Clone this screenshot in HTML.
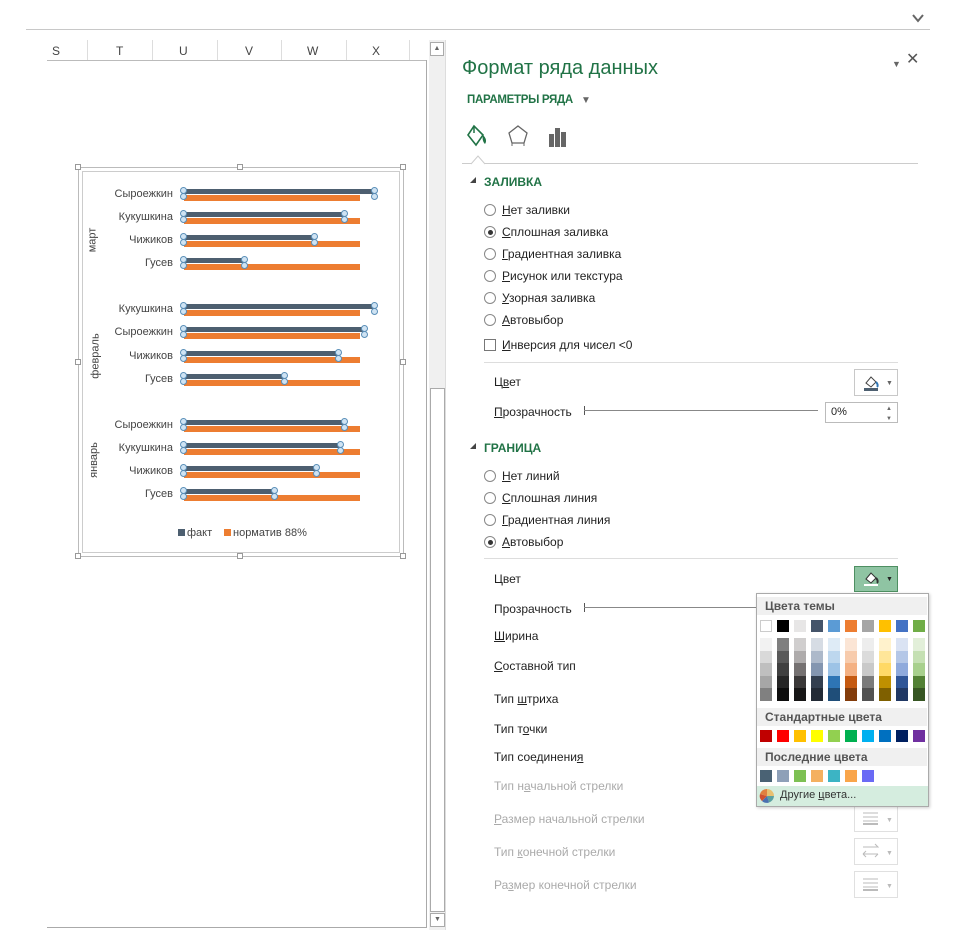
<!DOCTYPE html>
<html><head><meta charset="utf-8"><style>
*{margin:0;padding:0;box-sizing:border-box}
body{width:976px;height:931px;background:#fff;position:relative;overflow:hidden;font-family:"Liberation Sans","DejaVu Sans",sans-serif;font-size:12px;color:#222}
.a{position:absolute}
.t{position:absolute;white-space:nowrap;line-height:14px}
.lbl{position:absolute;right:803px;font-size:11px;color:#444;white-space:nowrap;line-height:12px}
.d{position:absolute;height:5px;background:#4d5f70;left:184px}
.o{position:absolute;height:6px;background:#ed7d31;left:184px;width:176px}
.rad{position:absolute;width:12px;height:12px;border:1px solid #888;border-radius:50%;background:#fff}
.rad.on::after{content:"";position:absolute;left:2.5px;top:2.5px;width:5px;height:5px;border-radius:50%;background:#333}
.rt{position:absolute;left:502px;font-size:12px;color:#222;white-space:nowrap}
.pl{position:absolute;left:494px;font-size:12px;color:#222;white-space:nowrap}
.gr{color:#aaa}
.sec{position:absolute;left:484px;font-weight:bold;color:#217346;font-size:12px;font-family:"Liberation Sans Narrow","Liberation Sans",sans-serif}
.tri{position:absolute;left:470px;width:0;height:0;border-left:6px solid transparent;border-bottom:6px solid #444}
.btn{position:absolute;left:854px;width:44px;height:27px;border:1px solid #c8c8c8;background:#fff}
.hd{position:absolute;left:757px;width:170px;height:18px;background:#f0f0f0;font-weight:bold;color:#555;font-size:12px;padding-left:8px;line-height:18px}
.sw{position:absolute;width:12px;height:12px}
.h{position:absolute;width:7px;height:7px;border:1px solid #5a8fb8;border-radius:50%;background:#cfe3f3}
</style></head><body>
<div class="a" style="left:26px;top:29px;width:904px;height:1px;background:#c8c8c8"></div>
<svg class="a" style="left:912px;top:13px" width="12" height="10"><path d="M1 2 L6 8 L11 2" fill="none" stroke="#666" stroke-width="2"/></svg>
<div class="a" style="left:47px;top:40px;width:379px;height:21px;border-bottom:1px solid #bbb"></div>
<div class="t" style="left:52px;top:44px;color:#444">S</div>
<div class="t" style="left:116px;top:44px;color:#444">T</div>
<div class="t" style="left:179px;top:44px;color:#444">U</div>
<div class="t" style="left:245px;top:44px;color:#444">V</div>
<div class="t" style="left:307px;top:44px;color:#444">W</div>
<div class="t" style="left:372px;top:44px;color:#444">X</div>
<div class="a" style="left:87px;top:40px;width:1px;height:20px;background:#ddd"></div>
<div class="a" style="left:152px;top:40px;width:1px;height:20px;background:#ddd"></div>
<div class="a" style="left:217px;top:40px;width:1px;height:20px;background:#ddd"></div>
<div class="a" style="left:281px;top:40px;width:1px;height:20px;background:#ddd"></div>
<div class="a" style="left:346px;top:40px;width:1px;height:20px;background:#ddd"></div>
<div class="a" style="left:409px;top:40px;width:1px;height:20px;background:#ddd"></div>
<div class="a" style="left:426px;top:60px;width:1px;height:868px;background:#aaa"></div>
<div class="a" style="left:47px;top:927px;width:380px;height:1px;background:#aaa"></div>
<div class="a" style="left:429px;top:40px;width:17px;height:890px;background:#f0f0f0;border-right:1px solid #ddd"></div>
<div class="a" style="left:430px;top:42px;width:14px;height:14px;border:1px solid #aaa;background:#fff;font-size:7px;color:#666;text-align:center;line-height:12px">&#9650;</div>
<div class="a" style="left:430px;top:388px;width:15px;height:524px;border:1px solid #aaa;background:#fff"></div>
<div class="a" style="left:430px;top:913px;width:15px;height:14px;border:1px solid #aaa;background:#fff;font-size:7px;color:#666;text-align:center;line-height:12px">&#9660;</div>
<div class="a" style="left:78px;top:167px;width:326px;height:390px;border:1px solid #bbb"></div>
<div class="a" style="left:82px;top:171px;width:318px;height:382px;border:1px solid #ccc"></div>
<div class="a" style="left:75px;top:164px;width:6px;height:6px;border:1px solid #999;background:#fff"></div>
<div class="a" style="left:237px;top:164px;width:6px;height:6px;border:1px solid #999;background:#fff"></div>
<div class="a" style="left:400px;top:164px;width:6px;height:6px;border:1px solid #999;background:#fff"></div>
<div class="a" style="left:75px;top:359px;width:6px;height:6px;border:1px solid #999;background:#fff"></div>
<div class="a" style="left:400px;top:359px;width:6px;height:6px;border:1px solid #999;background:#fff"></div>
<div class="a" style="left:75px;top:553px;width:6px;height:6px;border:1px solid #999;background:#fff"></div>
<div class="a" style="left:237px;top:553px;width:6px;height:6px;border:1px solid #999;background:#fff"></div>
<div class="a" style="left:400px;top:553px;width:6px;height:6px;border:1px solid #999;background:#fff"></div>
<div class="t" style="left:80px;top:233px;font-size:11px;color:#444;transform:rotate(-90deg)">март</div>
<div class="t" style="left:73px;top:349px;font-size:11px;color:#444;transform:rotate(-90deg)">февраль</div>
<div class="t" style="left:76px;top:453px;font-size:11px;color:#444;transform:rotate(-90deg)">январь</div>
<div class="lbl" style="top:188px">Сыроежкин</div>
<div class="lbl" style="top:211px">Кукушкина</div>
<div class="lbl" style="top:234px">Чижиков</div>
<div class="lbl" style="top:257px">Гусев</div>
<div class="lbl" style="top:303px">Кукушкина</div>
<div class="lbl" style="top:326px">Сыроежкин</div>
<div class="lbl" style="top:350px">Чижиков</div>
<div class="lbl" style="top:373px">Гусев</div>
<div class="lbl" style="top:419px">Сыроежкин</div>
<div class="lbl" style="top:442px">Кукушкина</div>
<div class="lbl" style="top:465px">Чижиков</div>
<div class="lbl" style="top:488px">Гусев</div>
<div id="bars"></div>
<div class="a" style="left:178px;top:529px;width:7px;height:7px;background:#4d5f70"></div>
<div class="t" style="left:187px;top:526px;font-size:11px;color:#444">факт</div>
<div class="a" style="left:224px;top:529px;width:7px;height:7px;background:#ed7d31"></div>
<div class="t" style="left:233px;top:526px;font-size:11px;color:#444">норматив 88%</div>
<div class="t" style="left:462px;top:56px;font-size:20px;line-height:24px;color:#217346">Формат ряда данных</div>
<div class="t" style="left:892px;top:57px;font-size:9px;color:#666">&#9660;</div>
<div class="t" style="left:906px;top:53px;font-size:16px;color:#555">&#10005;</div>
<div class="t" style="left:467px;top:93px;font-weight:bold;color:#217346;font-size:11.5px;letter-spacing:-0.3px">ПАРАМЕТРЫ РЯДА</div>
<div class="t" style="left:581px;top:94px;font-size:10px;color:#666">&#9660;</div>
<svg class="a" style="left:465px;top:123px" width="28" height="26" viewBox="0 0 28 26"><path d="M9 3 L3 12 L11 22 L18 12 Z" fill="none" stroke="#217346" stroke-width="1.6"/><path d="M9 3 v7" stroke="#217346" stroke-width="1.5"/><path d="M18 12 c3 3 4 6 2 9 c-2-2-3-5-2-9z" fill="#217346"/></svg>
<svg class="a" style="left:507px;top:124px" width="24" height="24"><path d="M11 2 L20 9 L17 19 L5 19 L2 9 Z" fill="none" stroke="#666" stroke-width="1.3"/><path d="M5 19v3M17 19v3" stroke="#666"/></svg>
<svg class="a" style="left:547px;top:126px" width="24" height="22"><rect x="2" y="8" width="5" height="13" fill="#666"/><rect x="8" y="2" width="5" height="19" fill="#666"/><rect x="14" y="6" width="5" height="15" fill="#666"/></svg>
<div class="a" style="left:462px;top:163px;width:456px;height:1px;background:#ccc"></div>
<svg class="a" style="left:471px;top:155px" width="16" height="10"><path d="M0 9 L7 1 L14 9" fill="#fff" stroke="#ccc"/></svg>
<div class="tri" style="top:177px"></div><div class="sec" style="top:175px">ЗАЛИВКА</div>
<div class="rad" style="left:484px;top:204px"></div><div class="rt" style="top:203px"><u>Н</u>ет заливки</div>
<div class="rad on" style="left:484px;top:226px"></div><div class="rt" style="top:225px"><u>С</u>плошная заливка</div>
<div class="rad" style="left:484px;top:248px"></div><div class="rt" style="top:247px"><u>Г</u>радиентная заливка</div>
<div class="rad" style="left:484px;top:270px"></div><div class="rt" style="top:269px"><u>Р</u>исунок или текстура</div>
<div class="rad" style="left:484px;top:292px"></div><div class="rt" style="top:291px"><u>У</u>зорная заливка</div>
<div class="rad" style="left:484px;top:314px"></div><div class="rt" style="top:313px"><u>А</u>втовыбор</div>
<div class="a" style="left:484px;top:339px;width:12px;height:12px;border:1px solid #777"></div><div class="rt" style="top:338px"><u>И</u>нверсия для чисел &lt;0</div>
<div class="a" style="left:484px;top:362px;width:414px;height:1px;background:#ddd"></div>
<div class="pl" style="top:375px">Ц<u>в</u>ет</div>
<div class="btn" style="top:369px"></div>
<svg class="a" style="left:861px;top:373px" width="22" height="18"><path d="M5 10 L10 4 L15 9 L10 14 Z" fill="none" stroke="#444"/><path d="M15 9c2 2 2 4 1 5" stroke="#2e75b5" fill="none" stroke-width="2"/><rect x="3" y="15" width="14" height="3" fill="#4d5f70"/></svg>
<div class="t" style="left:886px;top:377px;font-size:7px;color:#666">&#9660;</div>
<div class="pl" style="top:405px"><u>П</u>розрачность</div>
<div class="a" style="left:584px;top:406px;width:1px;height:9px;background:#555"></div>
<div class="a" style="left:584px;top:410px;width:234px;height:1px;background:#888"></div>
<div class="a" style="left:825px;top:402px;width:73px;height:21px;border:1px solid #bbb"></div>
<div class="t" style="left:831px;top:405px;font-size:11px">0%</div>
<div class="t" style="left:886px;top:402px;font-size:6px;color:#666">&#9650;</div>
<div class="t" style="left:886px;top:412px;font-size:6px;color:#666">&#9660;</div>
<div class="tri" style="top:443px"></div><div class="sec" style="top:441px">ГРАНИЦА</div>
<div class="rad" style="left:484px;top:470px"></div><div class="rt" style="top:469px"><u>Н</u>ет линий</div>
<div class="rad" style="left:484px;top:492px"></div><div class="rt" style="top:491px"><u>С</u>плошная линия</div>
<div class="rad" style="left:484px;top:514px"></div><div class="rt" style="top:513px"><u>Г</u>радиентная линия</div>
<div class="rad on" style="left:484px;top:536px"></div><div class="rt" style="top:535px"><u>А</u>втовыбор</div>
<div class="a" style="left:484px;top:558px;width:414px;height:1px;background:#ddd"></div>
<div class="pl" style="top:572px">Цвет</div>
<div class="btn" style="top:566px;background:#8fc4a3;border-color:#4e8f62;height:26px"></div>
<svg class="a" style="left:861px;top:569px" width="22" height="18"><path d="M5 10 L10 4 L15 9 L10 14 Z" fill="#fff" stroke="#333"/><path d="M15 9c2 2 2 4 1 5" stroke="#333" fill="none" stroke-width="2"/><rect x="3" y="15" width="14" height="2" fill="#fff"/></svg>
<div class="t" style="left:886px;top:573px;font-size:7px;color:#222">&#9660;</div>
<div class="pl" style="top:602px">Прозрачность</div>
<div class="a" style="left:584px;top:603px;width:1px;height:9px;background:#555"></div>
<div class="a" style="left:584px;top:607px;width:172px;height:1px;background:#888"></div>
<div class="pl" style="top:629px"><u>Ш</u>ирина</div>
<div class="pl" style="top:659px"><u>С</u>оставной тип</div>
<div class="pl" style="top:692px">Тип <u>ш</u>триха</div>
<div class="pl" style="top:722px">Тип т<u>о</u>чки</div>
<div class="pl" style="top:750px">Тип соединени<u>я</u></div>
<div class="pl gr" style="top:779px">Тип н<u>а</u>чальной стрелки</div>
<div class="pl gr" style="top:812px"><u>Р</u>азмер начальной стрелки</div>
<div class="pl gr" style="top:845px">Тип <u>к</u>онечной стрелки</div>
<div class="pl gr" style="top:878px">Ра<u>з</u>мер конечной стрелки</div>
<div class="btn" style="top:805px;border-color:#e0e0e0"></div>
<div class="btn" style="top:838px;border-color:#e0e0e0"></div>
<div class="btn" style="top:871px;border-color:#e0e0e0"></div>
<svg class="a" style="left:862px;top:811px" width="18" height="14"><path d="M1 2h15M1 6h15M1 10h15" stroke="#bbb"/><path d="M1 13h15" stroke="#bbb" stroke-width="2"/></svg>
<svg class="a" style="left:862px;top:877px" width="18" height="14"><path d="M1 2h15M1 6h15M1 10h15" stroke="#bbb"/><path d="M1 13h15" stroke="#bbb" stroke-width="2"/></svg>
<svg class="a" style="left:862px;top:843px" width="18" height="16"><path d="M1 4h15l-3-3M1 11h15M1 11l3-3M16 11l-3 3M1 11l3 3" stroke="#bbb" fill="none"/></svg>
<div class="t" style="left:886px;top:814px;font-size:7px;color:#bbb">&#9660;</div>
<div class="t" style="left:886px;top:847px;font-size:7px;color:#bbb">&#9660;</div>
<div class="t" style="left:886px;top:880px;font-size:7px;color:#bbb">&#9660;</div>
<div class="a" style="left:756px;top:593px;width:173px;height:214px;border:1px solid #aaa;background:#fff;box-shadow:1px 1px 3px rgba(0,0,0,.2)"></div>
<div class="hd" style="top:597px">Цвета темы</div>
<div class="hd" style="top:708px">Стандартные цвета</div>
<div class="hd" style="top:748px">Последние цвета</div>
<div class="a" style="left:757px;top:786px;width:171px;height:20px;background:#d5eddf"></div>
<svg class="a" style="left:759px;top:788px" width="16" height="16"><path d="M8 8L8 1A7 7 0 0 1 15 8Z" fill="#e8c070"/><path d="M8 8L15 8A7 7 0 0 1 10 14.5Z" fill="#5ba0a0"/><path d="M8 8L10 14.5A7 7 0 0 1 3 13Z" fill="#4a70b0"/><path d="M8 8L3 13A7 7 0 0 1 1 6Z" fill="#d05030"/><path d="M8 8L1 6A7 7 0 0 1 8 1Z" fill="#e08040"/></svg>
<div class="t" style="left:780px;top:788px;font-size:11px;color:#333">Другие <u>ц</u>вета...</div>
<div id="sw"></div>
<script>
var b=[[194,375],[217,345],[240,315],[263,245],[309,375],[332,365],[356,339],[379,285],[425,345],[448,341],[471,317],[494,275]];
var h='';b.forEach(function(r){var y=r[0]-5;h+='<div class="d" style="top:'+y+'px;width:'+(r[1]-184)+'px"></div><div class="o" style="top:'+(y+6)+'px"></div>';
[184,r[1]].forEach(function(x){h+='<div class="h" style="left:'+(x-4)+'px;top:'+(y-2)+'px"></div><div class="h" style="left:'+(x-4)+'px;top:'+(y+4)+'px"></div>'})});
document.getElementById('bars').innerHTML=h;
var th=['ffffff','000000','e7e6e6','44546a','5b9bd5','ed7d31','a5a5a5','ffc000','4472c4','70ad47'];
var sh=[['f2f2f2','d9d9d9','bfbfbf','a6a6a6','808080'],['7f7f7f','595959','404040','262626','0d0d0d'],['d0cece','aeabab','757171','3a3838','171616'],['d6dce4','adb9ca','8496b0','333f4f','222a35'],['deebf6','bdd7ee','9dc3e6','2e75b5','1f4e79'],['fbe5d5','f7cbac','f4b183','c55a11','833c0b'],['ededed','dbdbdb','c9c9c9','7b7b7b','525252'],['fff2cc','ffe699','ffd966','bf9000','7f6000'],['dae3f3','b4c7e7','8faadc','2f5597','203864'],['e2efd9','c5e0b3','a8d08d','538135','375623']];
var st=['c00000','ff0000','ffc000','ffff00','92d050','00b050','00b0f0','0070c0','002060','7030a0'];
var rc=['4a6274','8ea0b8','7dc053','f4b060','3cb4c4','f9a54a','6a6af5'];
var s='';for(var i=0;i<10;i++){var x=760+i*17;
s+='<div class="sw" style="left:'+x+'px;top:620px;background:#'+th[i]+';'+(i==0?'border:1px solid #ccc':'')+'"></div>';
for(var j=0;j<5;j++)s+='<div class="sw" style="left:'+x+'px;top:'+(638+j*12.6)+'px;height:12.6px;background:#'+sh[i][j]+'"></div>';
s+='<div class="sw" style="left:'+x+'px;top:730px;background:#'+st[i]+'"></div>';
if(i<7)s+='<div class="sw" style="left:'+x+'px;top:770px;background:#'+rc[i]+'"></div>';}
document.getElementById('sw').innerHTML=s;
</script>
</body></html>
